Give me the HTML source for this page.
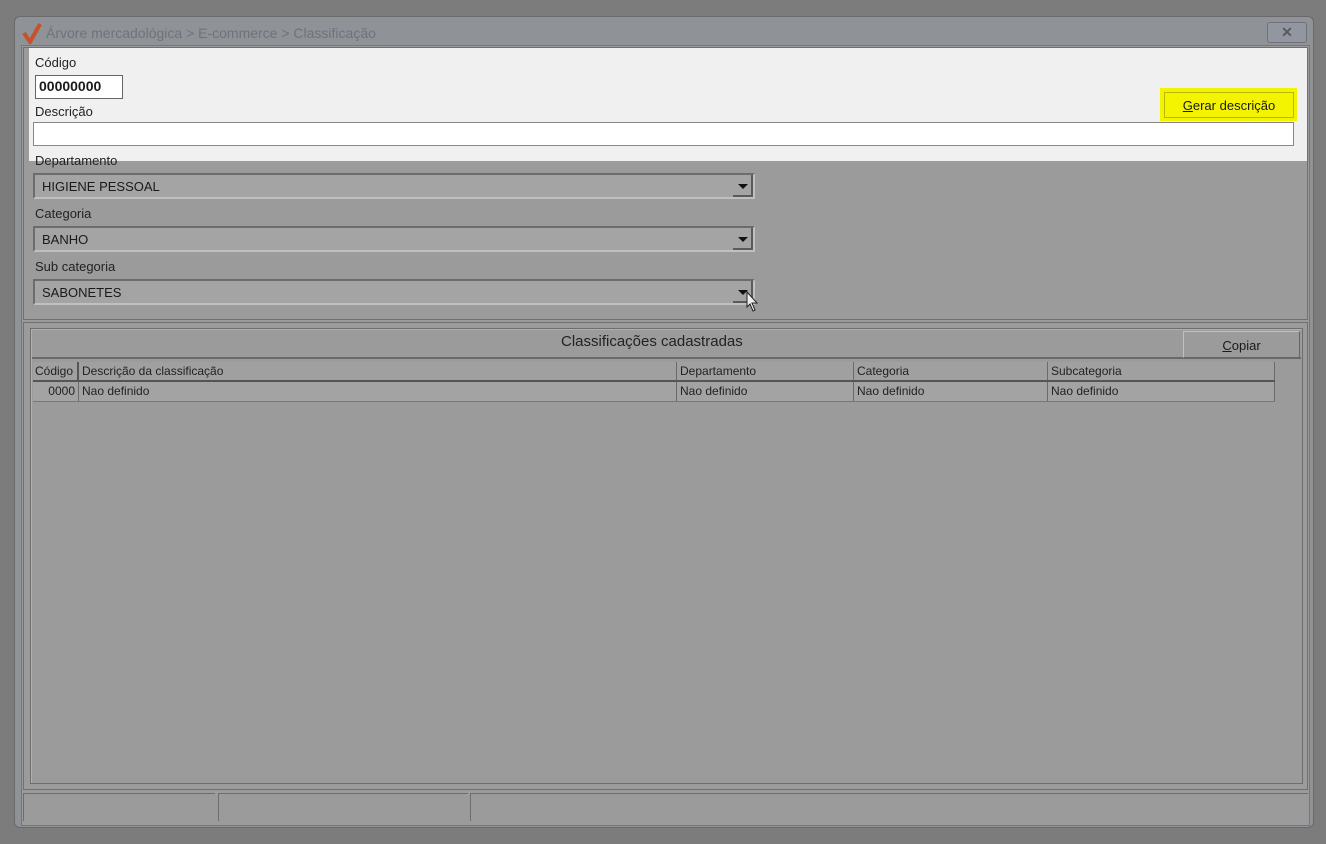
<!DOCTYPE html>
<html><head><meta charset="utf-8"><style>
*{box-sizing:border-box;margin:0;padding:0}
body{width:1326px;height:844px;background:#7c7c7c;font-family:"Liberation Sans",sans-serif;font-size:13px;color:#1a1a1a;position:relative;overflow:hidden}
.a{position:absolute}
.win{left:14px;top:16px;width:1300px;height:812px;background:#8f9398;border:1px solid #6a6a6a;border-radius:6px}
.body{left:21px;top:45px;width:1289px;height:781px;background:#9b9b9b;border:1px solid #777}
.lbl{font-size:13px;color:#222}
.combo{height:26px;background:#a4a4a4;border:2px solid #6c6c6c;border-right-color:#c0c0c0;border-bottom-color:#c0c0c0;font-size:13px;padding:4px 7px;color:#1a1a1a}
.arr{position:absolute;right:0;top:0;width:20px;height:22px;background:#a4a4a4;border-right:2px solid #5a5a5a;border-bottom:2px solid #5a5a5a}
.arr:after{content:"";position:absolute;left:5px;top:9px;border-left:5px solid transparent;border-right:5px solid transparent;border-top:5px solid #111}
.grp{border:1px solid #6e6e6e;box-shadow:inset 1px 1px 0 #b0b0b0}
.hd{font-size:12px;color:#222;white-space:nowrap;padding-left:3px;line-height:18px;border-right:1px solid #6a6a6a}
</style></head><body>
<div class="a win"></div>
<svg class="a" style="left:22px;top:22px" width="20" height="22"><path d="M2 11 L8 20 L18 2" stroke="#c7522a" stroke-width="4" fill="none"/></svg>
<div class="a" style="left:46px;top:25px;font-size:14px;color:#6f7378">Árvore mercadológica &gt; E-commerce &gt; Classificação</div>
<div class="a" style="left:1267px;top:22px;width:40px;height:21px;border:1px solid #6f7378;border-radius:3px;background:#9196a0;color:#5a5a5a;text-align:center;font-size:14px;line-height:18px;font-weight:bold">✕</div>
<div class="a body"></div>
<div class="a" style="left:23px;top:47px;width:1285px;height:273px;border:1px solid #707070"></div>
<div class="a" style="left:29px;top:48px;width:1278px;height:113px;background:#f0f0f0"></div>
<div class="a lbl" style="left:35px;top:55px">Código</div>
<div class="a" style="left:35px;top:75px;width:88px;height:24px;background:#fff;border:1px solid #666;font-weight:bold;font-size:14px;padding:2px 3px">00000000</div>
<div class="a lbl" style="left:35px;top:104px">Descrição</div>
<div class="a" style="left:33px;top:122px;width:1261px;height:24px;background:#fff;border:1px solid #888"></div>
<div class="a" style="left:1160px;top:88px;width:137px;height:33px;background:#f4f400"></div>
<div class="a" style="left:1164px;top:92px;width:130px;height:26px;border:1px solid #b8b800;text-align:center;line-height:26px;font-size:13px"><u>G</u>erar descrição</div>
<div class="a lbl" style="left:35px;top:153px">Departamento</div>
<div class="a combo" style="left:33px;top:173px;width:722px">HIGIENE PESSOAL<div class="arr"></div></div>
<div class="a lbl" style="left:35px;top:206px">Categoria</div>
<div class="a combo" style="left:33px;top:226px;width:722px">BANHO<div class="arr"></div></div>
<div class="a lbl" style="left:35px;top:259px">Sub categoria</div>
<div class="a combo" style="left:33px;top:279px;width:722px">SABONETES<div class="arr"></div></div>
<svg class="a" style="left:746px;top:291px" width="14" height="22"><path d="M1 1 L1 16 L4 13 L7 20 L9 19 L6 12 L11 12 Z" fill="#eee" stroke="#222" stroke-width="1"/></svg>
<div class="a" style="left:23px;top:322px;width:1285px;height:468px;border:1px solid #707070"></div>
<div class="a grp" style="left:30px;top:328px;width:1273px;height:456px"></div>
<div class="a" style="left:32px;top:330px;width:1269px;height:29px;border-bottom:2px solid #6a6a6a"></div>
<div class="a" style="left:561px;top:333px;font-size:15px;color:#222">Classificações cadastradas</div>
<div class="a" style="left:1183px;top:331px;width:117px;height:27px;border:1px solid #c0c0c0;border-right-color:#666;border-bottom-color:#666;text-align:center;line-height:27px"><u>C</u>opiar</div>
<div class="a" style="left:33px;top:362px;width:1242px;height:20px;display:flex;border-bottom:2px solid #555;background:#a0a0a0">
<div class="hd" style="width:46px;border-right:2px solid #555;padding-left:2px">Código</div>
<div class="hd" style="width:598px">Descrição da classificação</div>
<div class="hd" style="width:177px">Departamento</div>
<div class="hd" style="width:194px">Categoria</div>
<div class="hd" style="width:227px">Subcategoria</div>
</div>
<div class="a" style="left:33px;top:382px;width:1242px;height:20px;display:flex;border-bottom:1px solid #777;background:#a3a3a3">
<div class="hd" style="width:46px;text-align:right;padding-right:3px">0000</div>
<div class="hd" style="width:598px">Nao definido</div>
<div class="hd" style="width:177px">Nao definido</div>
<div class="hd" style="width:194px">Nao definido</div>
<div class="hd" style="width:227px">Nao definido</div>
</div>
<div class="a" style="left:23px;top:793px;width:192px;height:28px;border-top:1px solid #6e6e6e;border-left:1px solid #6e6e6e"></div>
<div class="a" style="left:218px;top:793px;width:250px;height:28px;border-top:1px solid #6e6e6e;border-left:1px solid #6e6e6e"></div>
<div class="a" style="left:470px;top:793px;width:838px;height:28px;border-top:1px solid #6e6e6e;border-left:1px solid #6e6e6e"></div>
</body></html>
